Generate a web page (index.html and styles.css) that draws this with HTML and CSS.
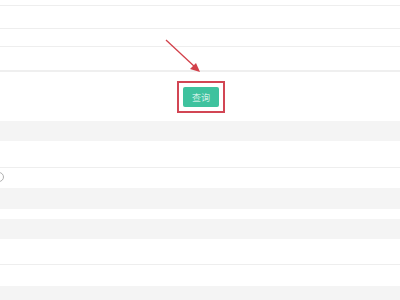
FILE: index.html
```html
<!DOCTYPE html>
<html>
<head>
  <title>查询</title>
  <link rel="stylesheet" href="styles.css">
</head>
<body>
  <div class="page">
    <div class="row r1"></div>
    <div class="row r2"></div>
    <div class="row r3"></div>
    <div class="row r4"></div>
    <div class="row action">
      <div class="mark">
        <button class="btn">查询</button>
      </div>
    </div>
    <div class="band b1"></div>
    <div class="row r5"></div>
    <div class="row r6"><span class="radio"></span></div>
    <div class="band b2"></div>
    <div class="row r7"></div>
    <div class="band b3"></div>
    <div class="row r8"></div>
    <div class="row r9"></div>
    <div class="band b4"></div>
    <svg class="arrow" width="60" height="50" viewBox="0 0 60 50">
      <line x1="6" y1="1" x2="35" y2="28" stroke="#d2404a" stroke-width="1.3"/>
      <polygon points="40,33 30,30 36,24" fill="#d2404a"/>
    </svg>
  </div>
</body>
</html>
```

FILE: styles.css
```css
body {
  margin: 0;
  background-color: #fff;
  font-family: "Noto Sans CJK SC", "Liberation Sans", sans-serif;
}

.page {
  position: relative;
  width: 400px;
  height: 300px;
  overflow: hidden;
}

.row {
  border-bottom: 1px solid #eeeeee;
}

.r1 { height: 5px; }
.r2 { height: 22px; }
.r3 { height: 17px; }
.r4 { height: 23px; border-bottom: 2px solid #efefef; }
.r5 { height: 26px; }
.r6 { height: 20px; border-bottom: none; position: relative; }
.r7 { height: 10px; border-bottom: none; }
.r8 { height: 25px; }
.r9 { height: 21px; border-bottom: none; }

.action {
  height: 49px;
  border-bottom: none;
  display: flex;
  align-items: flex-start;
  padding-left: 177px;
}

.mark {
  margin-top: 9px;
  border: 2px solid #d24654;
  padding: 4px;
  display: flex;
}

.btn {
  width: 36px;
  height: 20px;
  border: none;
  border-radius: 2px;
  background-color: #3ec29e;
  color: #fff;
  font-family: "Noto Sans CJK SC", sans-serif;
  font-size: 9px;
  font-weight: 300;
  padding: 0;
}

.band {
  background-color: #f4f4f4;
}

.b1 { height: 20px; }
.b2 { height: 21px; }
.b3 { height: 20px; }
.b4 { height: 14px; }

.radio {
  position: absolute;
  left: -6px;
  top: 4px;
  width: 8px;
  height: 8px;
  border: 1px solid #b0b0b0;
  border-radius: 50%;
}

.arrow {
  position: absolute;
  left: 160px;
  top: 39px;
}
```
